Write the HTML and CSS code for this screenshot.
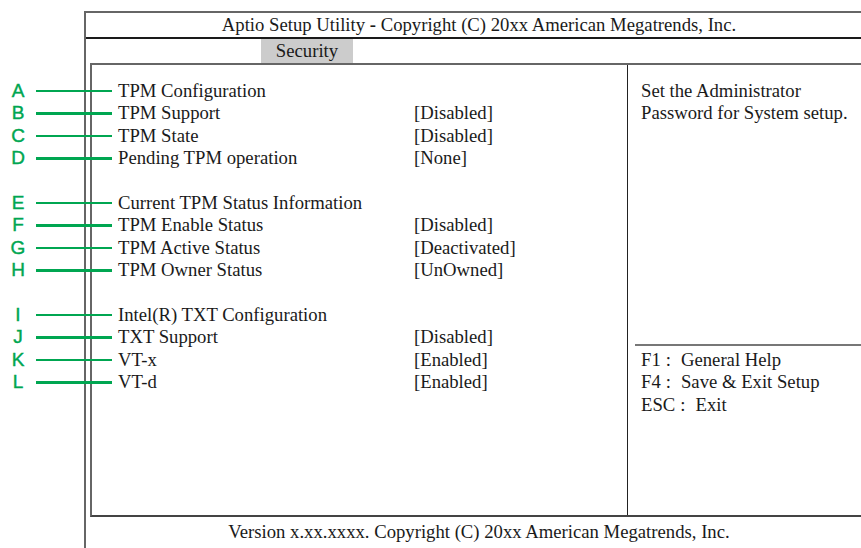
FILE: index.html
```html
<!DOCTYPE html>
<html lang="en">
<head>
    <meta charset="UTF-8">
    <meta name="viewport" content="width=device-width, initial-scale=1.0">
    <title>Aptio Setup Utility - Security</title>
    <link rel="stylesheet" href="styles.css">
</head>
<body>

<div id="setup-screen">
    <div id="title-bar">Aptio Setup Utility <b>-</b> Copyright (C) 20xx American Megatrends, Inc.</div>

    <div id="tab-bar">
        <span class="tab active">Security</span>
    </div>

    <div id="main-box">
        <div id="settings">
            <div class="row"><span class="callout"><i>A</i></span><span class="name">TPM Configuration</span></div>
            <div class="row"><span class="callout"><i>B</i></span><span class="name">TPM Support</span><span class="value">[Disabled]</span></div>
            <div class="row"><span class="callout"><i>C</i></span><span class="name">TPM State</span><span class="value">[Disabled]</span></div>
            <div class="row"><span class="callout"><i>D</i></span><span class="name">Pending TPM operation</span><span class="value">[None]</span></div>
            <div class="row blank"></div>
            <div class="row"><span class="callout"><i>E</i></span><span class="name">Current TPM Status Information</span></div>
            <div class="row"><span class="callout"><i>F</i></span><span class="name">TPM Enable Status</span><span class="value">[Disabled]</span></div>
            <div class="row"><span class="callout"><i>G</i></span><span class="name">TPM Active Status</span><span class="value">[Deactivated]</span></div>
            <div class="row"><span class="callout"><i>H</i></span><span class="name">TPM Owner Status</span><span class="value">[UnOwned]</span></div>
            <div class="row blank"></div>
            <div class="row"><span class="callout"><i>I</i></span><span class="name">Intel(R) TXT Configuration</span></div>
            <div class="row"><span class="callout"><i>J</i></span><span class="name">TXT Support</span><span class="value">[Disabled]</span></div>
            <div class="row"><span class="callout"><i>K</i></span><span class="name">VT-x</span><span class="value">[Enabled]</span></div>
            <div class="row"><span class="callout"><i>L</i></span><span class="name">VT-d</span><span class="value">[Enabled]</span></div>
        </div>

        <div id="help-panel">
            <div id="help-text">
                <div class="line">Set the Administrator</div>
                <div class="line">Password for System setup.</div>
            </div>
            <div id="key-help">
                <div class="line">F1<span class="colon">:</span>General Help</div>
                <div class="line">F4<span class="colon">:</span>Save &amp; Exit Setup</div>
                <div class="line">ESC<span class="colon">:</span>Exit</div>
            </div>
        </div>
    </div>

    <div id="footer"><span>Version x.xx.xxxx. Copyright (C) 20xx American Megatrends, Inc.</span></div>
</div>

</body>
</html>
```

FILE: styles.css
```css
body {
    margin: 0;
    overflow: hidden;
    background: #ffffff;
    font-family: "Liberation Serif", "Times New Roman", serif;
    font-size: 18.7px;
    color: #1a1a1a;
}

#setup-screen {
    width: 786px;
    height: 540px;
    margin: 11px 0 0 84px;
    border-top: 2px solid #666;
    border-left: 2px solid #666;
}

#title-bar {
    height: 24px;
    line-height: 24px;
    text-align: center;
    border-bottom: 2px solid #1a1a1a;
}

#tab-bar {
    height: 24px;
    padding-left: 175px;
}

#tab-bar .tab {
    display: inline-block;
    width: 92px;
    height: 24px;
    line-height: 24px;
    text-align: center;
    background: #cccccc;
}

#main-box {
    display: flex;
    height: 450px;
    margin-left: 4px;
    border-top: 2px solid #666;
    border-left: 2px solid #666;
    border-bottom: 2px solid #444;
}

#settings {
    width: 535px;
    padding: 15px 0 0 26px;
    box-sizing: border-box;
}

.row {
    position: relative;
    display: flex;
    height: 22.4px;
    line-height: 22.4px;
}

.row .name {
    width: 296px;
}

.callout {
    position: absolute;
    left: -108px;
    top: 0;
    display: flex;
    align-items: center;
    height: 22.4px;
}

.callout i {
    width: 16px;
    font-family: "Liberation Sans", Arial, sans-serif;
    font-style: normal;
    font-size: 19px;
    text-align: center;
    color: #00a651;
    -webkit-text-stroke: 0.4px #00a651;
}

.callout::after {
    content: "";
    width: 76px;
    height: 2.5px;
    margin-left: 10px;
    background: #00a651;
}

#help-panel {
    flex: 1;
    display: flex;
    flex-direction: column;
    justify-content: space-between;
    border-left: 1px solid #222;
    padding-top: 15px;
}

#help-panel .line {
    height: 22.4px;
    line-height: 22.4px;
    padding-left: 13px;
}

#key-help {
    margin: 0 0 99px 7px;
    padding-top: 3px;
    border-top: 2px solid #777;
}

#key-help .line {
    padding-left: 6px;
}

.colon {
    margin: 0 10px 0 5px;
}

#footer {
    height: 30px;
    line-height: 30px;
    text-align: center;
}
```
